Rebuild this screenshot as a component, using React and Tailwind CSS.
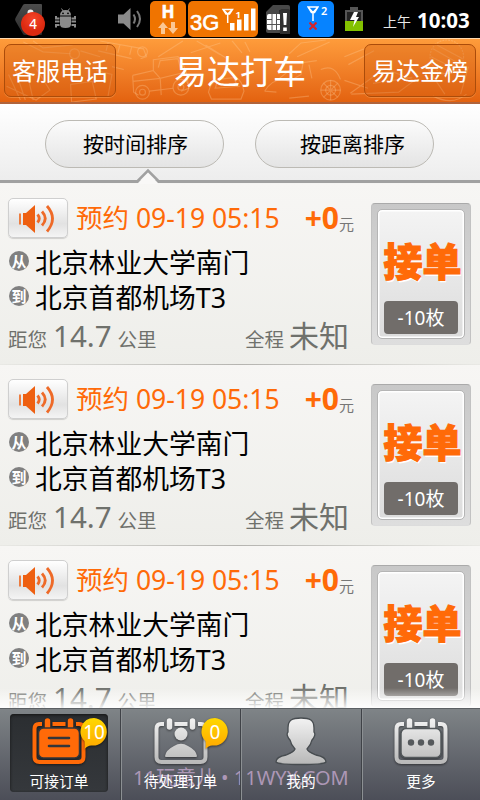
import React from 'react'

const orders = [
  { id: 1, time: '09-19 05:15', tip: '+0', from: '北京林业大学南门', to: '北京首都机场T3', away: '14.7', total: '未知', cost: '-10枚' },
  { id: 2, time: '09-19 05:15', tip: '+0', from: '北京林业大学南门', to: '北京首都机场T3', away: '14.7', total: '未知', cost: '-10枚' },
  { id: 3, time: '09-19 05:15', tip: '+0', from: '北京林业大学南门', to: '北京首都机场T3', away: '14.7', total: '未知', cost: '-10枚' },
]

const Antenna = ({ className }) => (
  <svg className={className} viewBox="0 0 12 15" fill="none" stroke="#fff" strokeWidth="1.5">
    <path d="M1 1h10L7.5 6.5h-3zM1 1l5 5.5L11 1M6 6v9" />
  </svg>
)

const StatusBar = () => (
  <div className="flex h-[38px] shrink-0 items-start bg-black text-white">
    {/* Launcher notification */}
    <svg className="ml-[14px] mt-[3px] h-[33px] w-[32px]" viewBox="0 0 32 33">
      <defs>
        <linearGradient id="hex" x2="0" y2="1">
          <stop stopColor="#4c4c4c" />
          <stop offset="1" stopColor="#2b2b2b" />
        </linearGradient>
        <radialGradient id="redDot" cy="0.3">
          <stop stopColor="#f5452a" />
          <stop offset="1" stopColor="#dd2a10" />
        </radialGradient>
      </defs>
      <path d="M11 1h16q1 0 1 1v29q0 1-1 1H11q-1.500 0-2-1L1.500 18q-.8-1.500 0-3L9 2q.6-1 2-1z" fill="url(#hex)" />
      <circle cx="16.500" cy="9.500" r="3" fill="#eee" />
      <circle cx="19" cy="21" r="12" fill="url(#redDot)" />
      <text x="19" y="25.500" textAnchor="middle" fontSize="13.500" fontWeight="500" fill="#fff">4</text>
    </svg>

    {/* USB debugging */}
    <svg className="ml-[9px] mt-[8px] h-[21px] w-[21px]" viewBox="0 0 21 21" fill="#8b8b8b">
      <path d="M5 7.500Q5 2 10.500 2T16 7.500z" />
      <path d="M6.500 0.500l2 3M14.500 0.500l-2 3" stroke="#8b8b8b" strokeWidth="1" />
      <path d="M5 8.500h11v8q0 3.500-5.500 3.500T5 16.500z" />
      <path d="M4.500 10.500H1V8M4.500 13.500H0M4.500 17H1v2.500M16.500 10.500H20V8M16.500 13.500H21M16.500 17H20v2.500" fill="none" stroke="#8b8b8b" strokeWidth="2" />
      <circle cx="8" cy="5.300" r="0.900" fill="#000" />
      <circle cx="13" cy="5.300" r="0.900" fill="#000" />
    </svg>

    {/* Volume */}
    <svg className="ml-[42px] mt-[8px] h-[22px] w-[24px]" viewBox="0 0 24 22" fill="#8a8a8a">
      <path d="M0 6.500h5.500L12.500 0v22L5.500 15.500H0z" />
      <path d="M15.500 6.500q3 4.500 0 9M19 3q6 8 0 16" fill="none" stroke="#777" strokeWidth="2" />
    </svg>

    {/* HSPA */}
    <div className="ml-[8px] mt-px flex h-[36px] w-[36px] flex-col items-center rounded-[5px] bg-[#f07400]">
      <span className="mt-[2px] font-['Open_Sans'] text-[17px] leading-[18px] font-bold [-webkit-text-stroke:0.6px_#fff]">H</span>
      <svg className="mt-px h-[12px] w-[20px]" viewBox="0 0 20 12" fill="#fbc793">
        <path d="M5 0l5 6H7v6H3V6H0zM15 12l-5-6h3V0h4v6h3z" />
      </svg>
    </div>

    {/* 3G signal */}
    <div className="ml-[2px] mt-px flex h-[36px] w-[70px] rounded-[5px] bg-[#f07400]">
      <span className="ml-[2px] mt-[9px] w-[32px] font-['Liberation_Sans'] text-[22px] leading-[26px] [-webkit-text-stroke:0.6px_#fff]">3G</span>
      <svg className="mt-[7px] h-[24px] w-[35px]" viewBox="0 0 35 24" fill="#fff">
        <path d="M1 1.500h9.500L7.500 6h-3.500zM1 1.500L5.700 6l4.800-4.500M5.700 6v9" fill="none" stroke="#fff" strokeWidth="1.500" />
        <text x="13.500" y="9.500" fontSize="9.500" fontWeight="700">1</text>
        <path d="M8 15h4.500v7.500H8zM15 11.500h4.500v11H15zM22 6h4.500v16.500H22zM29 0.500h4.500v22H29z" />
      </svg>
    </div>

    {/* Sim card */}
    <svg className="ml-[7px] mt-[4px] h-[31px] w-[26px]" viewBox="0 0 26 31">
      <path d="M8 1h15q2 0 2 2v24q0 2-2 2H3q-2 0-2-2V8z" fill="#484848" />
      <path d="M14 6h11v24H15z" fill="#2b2b2b" />
      <rect x="2" y="10" width="14" height="16" rx="2" fill="#fff" />
      <path d="M7 10v16M11.500 10v16M2 15.500h5M11 15.500h5M2 20.500h14" stroke="#555" strokeWidth="1" />
      <rect x="15" y="5" width="10" height="25" rx="2" fill="#303030" />
      <path d="M18 9h4l-.7 12h-2.600zM18.200 23.500h3.600v3.500h-3.600z" fill="#fff" />
    </svg>

    {/* Second sim */}
    <div className="ml-[7px] mt-px h-[36px] w-[36px] rounded-[5px] bg-[#0683ff]">
      <div className="flex">
        <Antenna className="ml-[9px] mt-[5px] h-[15px] w-[12px]" />
        <span className="ml-[2px] mt-[2px] text-[11px] leading-[15px] font-semibold">2</span>
      </div>
      <svg className="ml-[11px] mt-px h-[8px] w-[8px]" viewBox="0 0 8 8" stroke="#d8232a" strokeWidth="2.200">
        <path d="M0.500 0.500l7 7M7.500 0.500l-7 7" />
      </svg>
    </div>

    {/* Battery */}
    <svg className="ml-[11px] mt-[7px] h-[24px] w-[18px]" viewBox="0 0 18 24">
      <path d="M5 0h8v3h5v21H0V3h5z" fill="#555" />
      <path d="M2 5h14v9H2z" fill="#222" />
      <path d="M0 14h18v10H0z" fill="#83c100" />
      <path d="M9 5h4l-2 5h3l-6 10 1.500-7H5z" fill="#fff" />
    </svg>

    <span className="ml-[20px] mt-[12px] w-[34px] text-[14px] leading-[20px] text-[#e8e8e8]">上午</span>
    <span className="mt-[7px] text-[20.500px] leading-[26px] font-bold">10:03</span>
  </div>
)

// Faint vehicle doodles over the orange bar
const Doodles = () => (
  <svg className="absolute inset-0 h-full w-full" viewBox="0 0 480 66" fill="none" stroke="#ffd2a0" strokeOpacity="0.3" strokeWidth="1.200">
    <path d="M131 37l21-5v-11l25-3 4 4 5 14 2 14-8 3M131 37l1 17 5 3M131 43l28-3 1 17M152 32l7 8 24-6M157 29l2-7 18-2 3 12M148 53l24-3" />
    <circle cx="141" cy="54" r="7" /><circle cx="141" cy="54" r="3" />
    <circle cx="180" cy="49" r="8" /><circle cx="180" cy="49" r="3" />
    <path d="M98 2l44 8 3 8-6 2M96 12l34 8M106 4l-2 8M118 6l-2 8M130 8l-2 8" />
    <circle cx="141" cy="13" r="5" /><circle cx="72" cy="15" r="5" />
    <path d="M20 3l20 10 28 2M30 2l10 7 30-3M78 12l20 6M5 36l12 26M12 32l10 30M22 26l8 36M3 48l30 14 14-10-14-22M68 46l22-3 4 18-25 3zM94 32l16 4-4 22M110 28l12 3" />
    <path d="M157 18l25-16M205 6l22 14M190 14l30-10M196 2l24 14M232 2l10 12M245 3l5 10" />
    <path d="M208 54q2-10 10-13l18-2q6 3 8 14l-3 8h-30zM214 50l26-2M217 42l-2 8M234 40l4 9" />
    <path d="M265 53q10-16 25-10l12-7 2-12 14-2M265 53l12 1M280 40l10-8 8 3M290 60l20-2M310 26l3 14" />
    <circle cx="332" cy="52" r="10" /><circle cx="332" cy="52" r="5" /><path d="M322 52h20M332 42v20M325 45l14 14M339 45l-14 14M322 31q14-6 20 10" />
    <path d="M290 15l12-11 25-3M298 18l33-15M346 18l20-8M350 26l26-14M346 42l24 8M352 55l35-25 30 12-16 12-48 2M375 45l40-6" />
    <circle cx="450" cy="18" r="17" strokeDasharray="2 1" /><path d="M428 26l20 30M472 28l-8 28M440 36l30-3M436 58q20 10 34-2M436 10l28 16M440 6l26 14M434 18l28 14" />
  </svg>
)

const HeaderButton = ({ children }) => (
  <button className="h-[53px] w-[112px] rounded-[7px] border border-[#ab4c0a] bg-[#cd5a0d]/30 text-[24px] leading-[50px] text-white shadow-[0_1px_0_rgba(255,190,120,0.35)]">
    {children}
  </button>
)

const Header = () => (
  <div className="relative h-[66px] shrink-0 border-t border-[#ffd9ae] bg-linear-to-b from-[#fe9c3b] to-[#e2600c]">
    <Doodles />
    <div className="relative flex h-[65px] items-start justify-between border-b-2 border-[#b0643c] px-[4px] pt-[5px]">
      <HeaderButton>客服电话</HeaderButton>
      <h1 className="text-[33px] leading-[56px] text-white">易达打车</h1>
      <HeaderButton>易达金榜</HeaderButton>
    </div>
  </div>
)

const SortBar = () => (
  <div className="relative h-[79px] shrink-0 border-b-[3px] border-[#a1a1a1] bg-linear-to-b from-white to-[#ededed]">
    <div className="flex gap-[31px] pl-[45px] pt-[16px]">
      <button className="h-[48px] w-[179px] rounded-full border border-[#bcbab4] bg-linear-to-b from-[#fbfbfb] to-[#e4e4e4] pl-[2px] text-[21px] leading-[47px] text-black">按时间排序</button>
      <button className="h-[48px] w-[179px] rounded-full border border-[#bcbab4] bg-linear-to-b from-[#fbfbfb] to-[#e4e4e4] pl-[16px] text-[21px] leading-[47px] text-black">按距离排序</button>
    </div>
    {/* Pointer under the selected sort */}
    <svg className="absolute left-[137px] top-[64px] h-[16px] w-[22px]" viewBox="0 0 22 16">
      <path d="M1 15L11 4.500 21 15v1H1z" fill="#f9f8f7" />
      <path d="M0 13.500L11 2.500l11 11" fill="none" stroke="#a1a1a1" strokeWidth="2.600" />
    </svg>
  </div>
)

const VoiceButton = () => (
  <button className="flex h-[40px] w-[60px] items-center justify-center rounded-[5px] border border-[#cfcfcf] bg-linear-to-b from-white via-[#e2e2e2] via-65% to-[#f4f4f4] shadow-[0_1px_1px_rgba(0,0,0,0.15)]">
    <svg className="mr-[3px] h-[29px] w-[37px]" viewBox="0 0 37 29">
      <path d="M2 9.500v11" stroke="#ee6216" strokeWidth="1.600" />
      <path d="M5 9h3l9-8v28l-9-8H5z" fill="#ee5f10" />
      <path d="M19.500 10.500q3.500 4 0 8M24 7.500q6.500 7 0 14M29 2q11 12.500 0 25.500" fill="none" stroke="#ee6a28" strokeWidth="2.800" />
    </svg>
  </button>
)

const Place = ({ tag, name }) => (
  <div className="flex h-[35px] items-center">
    <span className="mb-[3px] ml-px flex h-[20px] w-[20px] items-center justify-center rounded-full bg-[#808080] text-[15px] leading-[20px] font-bold text-white">{tag}</span>
    <span className="ml-[6px] text-[26.800px] leading-[35px] text-black">{name}</span>
  </div>
)

const OrderRow = ({ order }) => (
  <div className="flex h-[181px] shrink-0 flex-col bg-linear-to-b from-[#f7f6f4] to-[#eeeeea]">
    <div className="flex h-[180px] justify-between pl-[8px] pr-[9px]">
      <div className="w-[342px] pt-[14px]">
        <div className="flex h-[40px] items-center">
          <VoiceButton />
          <span className="ml-[8px] whitespace-nowrap text-[26.500px] leading-[40px] text-[#ff6a08]">预约 {order.time}</span>
          <span className="ml-auto text-[30px] leading-[40px] font-bold text-[#ff6a08]">{order.tip}</span>
          <span className="mr-[-4px] mt-[12px] text-[15px] leading-[20px] text-[#777]">元</span>
        </div>
        <div className="mt-[7px]">
          <Place tag="从" name={order.from} />
          <Place tag="到" name={order.to} />
        </div>
        <div className="mt-[2px] flex h-[38px] items-baseline text-[#6f716c]">
          <span className="text-[19.500px] leading-[38px]">距您</span>
          <span className="ml-[6px] text-[29.500px] leading-[38px]">{order.away}</span>
          <span className="ml-[6px] text-[19.500px] leading-[38px]">公里</span>
          <span className="ml-auto text-[19.500px] leading-[38px]">全程</span>
          <span className="ml-[5px] mr-px text-[30px] leading-[38px]">{order.total}</span>
        </div>
      </div>
      <button className="mt-[19px] h-[142px] w-[100px] rounded-[4px] border border-t-[#aaa] border-x-[#c2c2c2] border-b-[#dcdcdc] bg-linear-to-b from-[#c8c8c8] to-[#dedede] p-[5px]">
        <div className="flex h-[130px] flex-col items-center rounded-[5px] border border-[#b5b5b5] bg-linear-to-b from-[#f4f4f4] to-[#dcdcdc] shadow-[inset_0_0_0_1.500px_#fff]">
          <span className="ml-[3px] mt-[23px] whitespace-nowrap text-[39px] leading-[56px] font-black text-[#ff6a08] [text-shadow:1px_2px_0_#fff] [-webkit-text-stroke:1.2px_#ff6a08]">接单</span>
          <span className="mt-[12px] h-[33px] w-[74px] rounded-[4px] bg-[#716d6a] text-[19px] leading-[34px] text-white">{order.cost}</span>
        </div>
      </button>
    </div>
    <div className="h-px bg-linear-to-r from-[#bdbcb8]/10 via-[#b5b4b0] to-[#bdbcb8]/10" />
  </div>
)

const Calendar = ({ color, children }) => (
  <svg className="h-[50px] w-[56px] drop-shadow-[0_1px_1px_rgba(0,0,0,0.5)]" viewBox="0 0 56 50">
    <defs>
      <linearGradient id="silver" x1="0" y1="0" x2="0" y2="50" gradientUnits="userSpaceOnUse">
        <stop stopColor="#f4f4f4" />
        <stop offset="1" stopColor="#b4b4b4" />
      </linearGradient>
    </defs>
    <path d="M11 7H8Q3.500 7 3.500 12v28q0 5 5 5h39q5 0 5-5V12q0-5-4.500-5h-3M21.500 7h13" fill="none" stroke={color} strokeWidth="4" />
    <path d="M16.500 4v6M39.500 4v6" stroke={color} strokeWidth="5.500" strokeLinecap="round" />
    {children}
  </svg>
)

const Bubble = ({ children, className }) => (
  <div className={`absolute flex h-[36px] w-[28px] justify-center ${className}`}>
    <svg className="absolute inset-0 h-full w-full drop-shadow-[0_1px_1px_rgba(0,0,0,0.5)]" viewBox="0 0 28 36">
      <defs>
        <linearGradient id="gold" x2="0" y2="1">
          <stop stopColor="#ffd800" />
          <stop offset="1" stopColor="#ffa800" />
        </linearGradient>
      </defs>
      <path d="M14 1a13.500 13.500 0 1 1-2 27.500Q8 28 4.500 32q.5-4 0-8A13.500 13.500 0 0 1 14 1z" fill="url(#gold)" />
    </svg>
    <span className="relative text-[19px] leading-[30px] text-white">{children}</span>
  </div>
)

const Tab = ({ label, icon, badge, active, className }) => (
  <div className={`relative flex justify-center pt-[5px] ${className}`}>
    <div className={`flex h-[78px] w-[98px] flex-col items-center rounded-[4px] pt-[3px] ${active ? 'bg-linear-to-b from-[#2b2e31] to-[#35383c] shadow-[inset_0_1px_3px_#151515]' : ''}`}>
      {icon}
      <span className="relative z-10 mt-[4px] whitespace-nowrap text-[14.700px] leading-[20px] text-white">{label}</span>
    </div>
    {badge && <Bubble className="left-[80px] top-[8px]">{badge}</Bubble>}
  </div>
)

const TabBar = () => (
  <div className="relative flex h-[92px] shrink-0 border-t border-[#5c6064] bg-linear-to-b from-[#7f8487] to-[#4c4e58]">
    <div className="absolute left-[133px] top-[56px] z-0 whitespace-nowrap text-[20px] leading-[26px] text-[#ad97b6]">11玩意儿 • 11WYX.COM</div>
    <Tab
      className="w-[120px] pr-[2px]"
      active
      label="可接订单"
      badge="10"
      icon={
        <Calendar color="#ff6a08">
          <rect x="7.500" y="11" width="41" height="30" rx="5" fill="#ff6a08" stroke="#33363a" strokeWidth="1.500" />
          <path d="M18 21h20M18 29h20" stroke="#33363a" strokeWidth="2.600" strokeLinecap="round" />
        </Calendar>
      }
    />
    <Tab
      className="w-[120px] border-l border-[#3f4247] shadow-[inset_1px_0_0_#8c9093]"
      label="待处理订单"
      badge="0"
      icon={
        <Calendar color="url(#silver)">
          <circle cx="28" cy="17" r="6.500" fill="url(#silver)" />
          <path d="M12 39q1-6 9-10 7-4.500 14 0 8 4 9 10 0 1-1 1H13q-1 0-1-1z" fill="url(#silver)" />
        </Calendar>
      }
    />
    <Tab
      className="w-[121px] border-l border-[#3f4247] shadow-[inset_1px_0_0_#8c9093]"
      label="我的"
      icon={
        <svg className="h-[50px] w-[56px]" viewBox="0 0 56 50">
          <path d="M28 1c9 0 13 2 13 10v4c2 2 0 6-2 8-1 5-3 7-5 9 1 3 4 4 9 6 6 1 10 3 10 7q-2 2.500-25 2.500T3 45c0-4 4-6 10-7 5-2 8-3 9-6-2-2-4-4-5-9-2-2-4-6-2-8v-4C15 3 19 1 28 1z" fill="url(#silver)" stroke="#474c50" strokeWidth="1.300" />
        </svg>
      }
    />
    <Tab
      className="w-[119px] border-l border-[#3f4247] shadow-[inset_1px_0_0_#8c9093]"
      label="更多"
      icon={
        <Calendar color="url(#silver)">
          <rect x="8" y="11.500" width="40" height="29" rx="5" fill="url(#silver)" stroke="#53585b" strokeWidth="1.500" />
          <g fill="#55595c">
            <circle cx="18" cy="25.500" r="3.200" />
            <circle cx="28" cy="25.500" r="3.200" />
            <circle cx="38" cy="25.500" r="3.200" />
          </g>
        </Calendar>
      }
    />
  </div>
)

const App = () => {
  return (
    <div className="flex h-[800px] w-[480px] flex-col overflow-hidden bg-[#f5f4f2] font-['Noto_Sans','Noto_Sans_CJK_SC',sans-serif]">
      <StatusBar />
      <Header />
      <SortBar />
      <div className="relative flex min-h-0 flex-1 flex-col overflow-hidden pt-px">
        {orders.map((order) => (
          <OrderRow key={order.id} order={order} />
        ))}
        <div className="absolute inset-x-0 bottom-0 h-[20px] bg-linear-to-b from-white/0 to-white/90" />
      </div>
      <TabBar />
    </div>
  )
}

export default App
